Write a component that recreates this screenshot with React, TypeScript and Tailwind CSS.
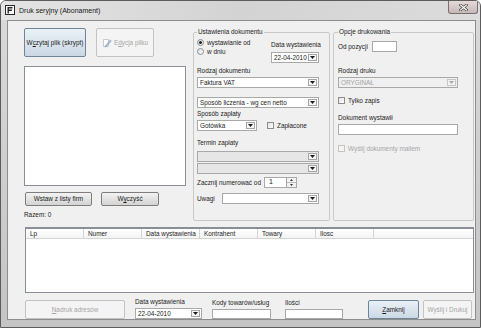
import React from "react";

const font = "font-['Liberation_Sans',Arial,sans-serif]";

function Tri({ color = "#1b1b1b" }: { color?: string }) {
  return (
    <svg width="5" height="3" viewBox="0 0 5 3">
      <path d="M0 0h5L2.5 3z" fill={color} />
    </svg>
  );
}

function Combo({
  value = "",
  className = "",
  disabled = false,
  grey = false,
}: {
  value?: string;
  className?: string;
  disabled?: boolean;
  grey?: boolean;
}) {
  const bg = grey ? "bg-[#e6e6e6]" : disabled ? "bg-[#f0f0f0]" : "bg-white";
  return (
    <div className={`flex h-[11px] items-center border border-[#a9a9a9] ${bg} ${className}`}>
      <span className={`min-w-0 flex-1 truncate pl-[2px] leading-[9px] ${disabled ? "text-[#a3a3a3]" : ""}`}>
        {value}
      </span>
      <span
        className={`mr-[1px] flex h-[7px] w-[9px] items-center justify-center border ${
          disabled ? "border-[#c6c6c6] bg-[#f2f2f2]" : "border-[#a5a5a5] bg-[#f6f6f6]"
        }`}
      >
        <Tri color={disabled ? "#a8a8a8" : "#1b1b1b"} />
      </span>
    </div>
  );
}

function Input({ className = "", children }: { className?: string; children?: React.ReactNode }) {
  return (
    <div className={`flex items-center border border-[#a9a9a9] bg-white pl-[2px] ${className}`}>{children}</div>
  );
}

function Radio({ checked }: { checked?: boolean }) {
  return (
    <span className="flex h-[7px] w-[7px] items-center justify-center rounded-full border border-[#8c8c8c] bg-linear-to-br from-[#dcdcdc] to-white">
      {checked && <span className="h-[3px] w-[3px] rounded-full bg-[#202020]" />}
    </span>
  );
}

function Check({ disabled }: { disabled?: boolean }) {
  return (
    <span
      className={`h-[7px] w-[7px] border ${
        disabled ? "border-[#c4c4c4] bg-[#f4f4f4]" : "border-[#8c8c8c] bg-linear-to-br from-[#e2e2e2] to-white"
      }`}
    />
  );
}

function Btn({
  children,
  className = "",
  kind = "normal",
}: {
  children: React.ReactNode;
  className?: string;
  kind?: "normal" | "blue" | "disabled";
}) {
  const look =
    kind === "blue"
      ? "border-[#6e8499] bg-linear-to-b from-[#eaf1f7] to-[#cbd8e4]"
      : kind === "disabled"
      ? "border-[#c3c3c3] bg-[#f4f4f4] text-[#a6a6a6]"
      : "border-[#7d7d7d] bg-linear-to-b from-[#f3f3f3] to-[#d3d3d3]";
  return (
    <div className={`flex items-center justify-center rounded-[2px] border ${look} ${className}`}>{children}</div>
  );
}

export default function App() {
  const cols = ["Lp", "Numer", "Data wystawienia", "Kontrahent", "Towary", "Ilosc"];

  return (
    <div
      className={`${font} flex h-[328px] w-[481px] flex-col overflow-hidden rounded-t-[6px] border border-[#5c5c5c] bg-linear-to-b from-[#dadada] to-[#c4c4c4] text-[6.4px] text-[#1c1c1c]`}
    >
      {/* title bar */}
      <div className="flex h-[19px] shrink-0 items-start bg-linear-to-r from-[#e4e4e4] via-[#d3d3d3] to-[#dcdcdc]">
        <div className="mt-[4px] ml-[4px]">
          <svg width="10" height="10" viewBox="0 0 10 10">
            <rect x="0.5" y="0.5" width="9" height="9" fill="#fafafa" stroke="#2a2a2a" />
            <path d="M2.5 2h5v1.4h-3.6v1.2h3v1.3h-3V8.5H2.5z" fill="#2a2a2a" />
          </svg>
        </div>
        <span className="mt-[5px] ml-[4px] text-[7px] leading-[9px] text-[#1a1a1a]">Druk seryjny (Abonament)</span>
        <div className="mr-[2px] ml-auto flex h-[13px] w-[30px] items-center justify-center rounded-b-[3px] border border-t-0 border-[#7a6f6f] bg-linear-to-b from-[#e4d9d9] to-[#c7b8b8]">
          <svg width="9" height="7" viewBox="0 0 9 7">
            <path d="M1.5 1l6 5M7.5 1l-6 5" stroke="#4a4a4a" strokeWidth="2.6" strokeLinecap="square" />
            <path d="M1.5 1l6 5M7.5 1l-6 5" stroke="#ffffff" strokeWidth="1.2" strokeLinecap="square" />
          </svg>
        </div>
      </div>

      {/* client area */}
      <div className="ml-[6px] flex h-[300px] w-[469px] shrink-0 flex-col border border-[#8d8d8d] bg-[#f0f0f0]">
        <div className="flex pt-[7px] pl-[16px]">
          {/* left column */}
          <div className="flex w-[163px] flex-col">
            <div className="flex h-[29px]">
              <Btn kind="blue" className="w-[62px]">
                <span>
                  W<span className="underline">c</span>zytaj plik (skrypt)
                </span>
              </Btn>
              <Btn kind="disabled" className="ml-[10px] w-[58px] gap-[2px]">
                <svg width="10" height="10" viewBox="0 0 10 10">
                  <path d="M1.5 1.5h5v7h-5z" fill="#fff" stroke="#bdbdbd" strokeWidth="0.8" />
                  <path d="M3 8.2l5.3-6.3 1 0.9L4.1 9H3z" fill="#a9bde0" stroke="#8298c0" strokeWidth="0.5" />
                </svg>
                <span>
                  E<span className="underline">d</span>ycja pliku
                </span>
              </Btn>
            </div>
            <div className="mt-[9px] h-[120px] w-[162px] border border-[#8a8f96] bg-white" />
            <div className="mt-[6px] flex h-[14px] pl-[1px]">
              <Btn className="w-[67px]">Wstaw z listy firm</Btn>
              <Btn className="ml-[9px] w-[58px]">
                <span>
                  W<span className="underline">y</span>czyść
                </span>
              </Btn>
            </div>
            <span className="mt-[5px] leading-[8px]">Razem: 0</span>
          </div>

          {/* Ustawienia dokumentu */}
          <fieldset className="ml-[6px] h-[193px] w-[137px] rounded-[2px] border border-[#c9c9c9] pr-[10px] pl-[3px]">
            <legend className="px-[1px] leading-[8px]">Ustawienia dokumentu</legend>
            <div className="mt-[2px] flex justify-between">
              <div className="flex flex-col">
                <div className="flex h-[9px] items-center gap-[3px]">
                  <Radio checked />
                  <span>wystawianie od</span>
                </div>
                <div className="flex h-[9px] items-center gap-[3px]">
                  <Radio />
                  <span>w dniu</span>
                </div>
              </div>
              <div className="mt-[3px] flex w-[48px] flex-col">
                <span className="leading-[8px] whitespace-nowrap">Data wystawienia</span>
                <Combo value="22-04-2010" className="mt-[3px]" />
              </div>
            </div>
            <div className="mt-[4px] leading-[8px]">Rodzaj dokumentu</div>
            <Combo value="Faktura VAT" className="mt-[2px]" />
            <Combo value="Sposób liczenia - wg cen netto" className="mt-[9px]" />
            <div className="mt-[2px] leading-[8px]">Sposób zapłaty</div>
            <div className="mt-[2px] flex items-center">
              <Combo value="Gotówka" className="w-[60px]" />
              <div className="ml-[10px] flex items-center gap-[3px]">
                <Check />
                <span>Zapłacone</span>
              </div>
            </div>
            <div className="mt-[8px] leading-[8px]">Termin zapłaty</div>
            <Combo grey className="mt-[4px]" />
            <Combo grey className="mt-[1px]" />
            <div className="mt-[3px] flex h-[11px] items-center gap-[3px]">
              <span>Zacznij numerować od</span>
              <div className="flex h-[11px]">
                <Input className="h-[11px] w-[23px]">
                  <span className="pl-[2px] text-[7px]">1</span>
                </Input>
                <div className="flex w-[10px] flex-col border border-l-0 border-[#a9a9a9] bg-[#f2f2f2]">
                  <div className="flex flex-1 items-center justify-center border-b border-[#bdbdbd]">
                    <svg width="3" height="2" viewBox="0 0 3 2">
                      <path d="M0 2h3L1.5 0z" fill="#333" />
                    </svg>
                  </div>
                  <div className="flex flex-1 items-center justify-center">
                    <svg width="3" height="2" viewBox="0 0 3 2">
                      <path d="M0 0h3L1.5 2z" fill="#333" />
                    </svg>
                  </div>
                </div>
              </div>
            </div>
            <div className="mt-[5px] flex items-center justify-between">
              <span>Uwagi</span>
              <Combo className="w-[97px]" />
            </div>
          </fieldset>

          {/* Opcje drukowania */}
          <fieldset className="ml-[3px] h-[193px] w-[141px] rounded-[2px] border border-[#c9c9c9] pl-[4px]">
            <legend className="px-[1px] leading-[8px]">Opcje drukowania</legend>
            <div className="mt-[5px] flex h-[11px] items-center">
              <span className="w-[34px]">Od pozycji</span>
              <Input className="h-[11px] w-[25px]" />
            </div>
            <div className="mt-[15px] leading-[8px]">Rodzaj druku</div>
            <Combo value="ORYGINAŁ" disabled className="mt-[2px] w-[120px]" />
            <div className="mt-[8px] flex h-[9px] items-center gap-[3px]">
              <Check />
              <span>Tylko zapis</span>
            </div>
            <div className="mt-[9px] leading-[8px]">Dokument wystawił</div>
            <Input className="mt-[2px] h-[11px] w-[120px]" />
            <div className="mt-[9px] flex h-[9px] items-center gap-[3px] text-[#a6a6a6]">
              <Check disabled />
              <span>Wyślij dokumenty mailem</span>
            </div>
          </fieldset>
        </div>

        {/* table */}
        <div className="mt-[6px] ml-[17px] h-[66px] w-[449px] border border-t-2 border-[#8a8f96] bg-white">
          <div className="flex h-[10px] border-b border-[#d5d5d5] bg-linear-to-b from-white to-[#f4f4f4]">
            {cols.map((c) => (
              <div key={c} className="flex w-[58px] items-center border-r border-[#d5d5d5] pl-[4px]">
                {c}
              </div>
            ))}
          </div>
        </div>

        {/* bottom row */}
        <div className="mt-[5px] flex items-end pl-[17px]">
          <Btn kind="disabled" className="h-[19px] w-[100px]">
            <span>
              <span className="underline">N</span>adruk adresów
            </span>
          </Btn>
          <div className="ml-[10px] flex w-[67px] flex-col">
            <span className="leading-[8px]">Data wystawienia</span>
            <Combo value="22-04-2010" className="mt-[2px] h-[10px]" />
          </div>
          <div className="ml-[10px] flex w-[59px] flex-col">
            <span className="leading-[8px] whitespace-nowrap">Kody towarów/usług</span>
            <Input className="mt-[2px] h-[10px]" />
          </div>
          <div className="ml-[14px] flex w-[58px] flex-col">
            <span className="leading-[8px]">Ilości</span>
            <Input className="mt-[2px] h-[10px]" />
          </div>
          <Btn kind="blue" className="ml-[25px] h-[19px] w-[51px]">
            <span>
              <span className="underline">Z</span>amknij
            </span>
          </Btn>
          <Btn kind="disabled" className="ml-[4px] h-[19px] w-[49px]">
            Wyślij i Drukuj
          </Btn>
        </div>
      </div>
    </div>
  );
}
